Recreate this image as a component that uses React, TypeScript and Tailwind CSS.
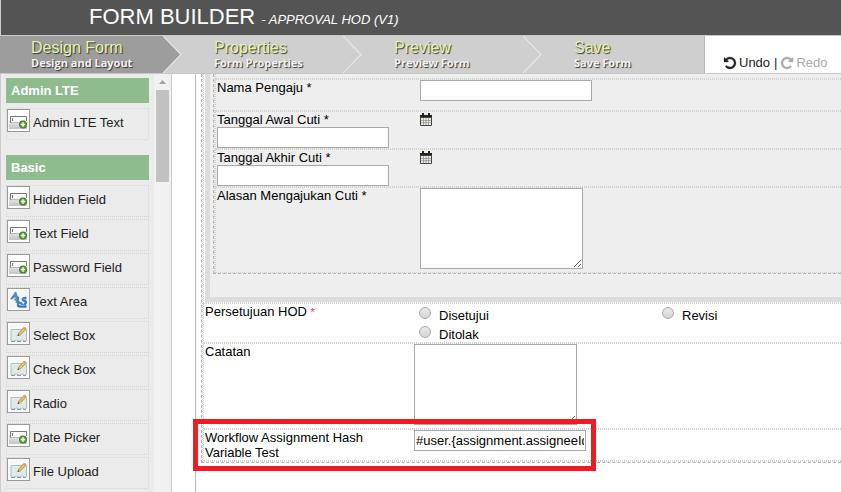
import { ReactNode } from "react";

type IconKind = "field" | "letters" | "pencil";

function FieldIcon() {
  return (
    <svg viewBox="0 0 21 21" className="size-full" aria-hidden="true">
      <defs>
        <linearGradient id="fieldBg" x1="0" y1="0" x2="0" y2="1">
          <stop offset="0" stopColor="#ececec" />
          <stop offset="1" stopColor="#c4c4c4" />
        </linearGradient>
      </defs>
      <rect x="1" y="10" width="18" height="9" fill="url(#fieldBg)" />
      <rect x="2" y="6" width="17" height="7" fill="#fafafa" />
      <path d="M2.500 13V6.500h16V11" fill="none" stroke="#777" />
      <path d="M2.500 12.500h9" stroke="#bbb" />
      <path d="M4.500 8v3" stroke="#777" />
      <circle cx="15" cy="14.500" r="4" fill="#3f7f22" />
      <circle cx="15" cy="14.500" r="3" fill="#5fa438" />
      <path d="M15 12.300v4.400M12.800 14.500h4.400" stroke="#fff" strokeWidth="1.400" />
    </svg>
  );
}

function LettersIcon() {
  return (
    <svg viewBox="0 0 21 21" className="size-full" aria-hidden="true">
      <rect x="1" y="1" width="19" height="19" fill="#f5f5f5" />
      <g fill="none" strokeLinecap="round" strokeLinejoin="round">
        <path d="M3.500 9.500c2-.5 3-3.500 4-5.500 1 2 .5 4 2 6M5 7.500h4" stroke="#4a8ad4" strokeWidth="2.200" />
        <path d="M7 10.500l4 2.500M8.500 9v4" stroke="#5fa15b" strokeWidth="1.800" />
        <path d="M10 8.500v8.500h3c2-1 1-3.500-2-3" stroke="#3f80cf" strokeWidth="2.200" />
        <path d="M17.500 9c-3-.5-3.500 2-1.500 2.500s2.500 2 1 3.500-1 2 .5 2.500h-6" stroke="#3a79c8" strokeWidth="2.400" />
        <path d="M15.500 10l1.500.5M12.500 16.500h4" stroke="#8fc0f0" strokeWidth=".8" />
      </g>
    </svg>
  );
}

function PencilIcon() {
  return (
    <svg viewBox="0 0 21 21" className="size-full" aria-hidden="true">
      <rect x="1" y="1" width="19" height="19" fill="#f8f8f8" />
      <path d="M3 6.500h15.500v11l-2 .5-2-1-3 1-3-1-3 1-2.500-.5z" fill="#dfe9ea" stroke="#b0c0c2" />
      <path d="M3 18.500h4M9 18.500h4M15 18.500h3" stroke="#8c9c9e" />
      <path d="M10 12.500l.7-2.500 5.300-5.500 1.800 1.800-5.300 5.500z" fill="#edc060" stroke="#9c7a38" strokeWidth=".7" />
      <path d="M15.500 5l1.300-1.300 1.900 1.800-1.300 1.400z" fill="#d99a80" />
      <path d="M9.500 13l.6-1.800 1.200 1.200z" fill="#444" />
    </svg>
  );
}

const icons: Record<IconKind, ReactNode> = {
  field: <FieldIcon />,
  letters: <LettersIcon />,
  pencil: <PencilIcon />,
};

const palette: { title: string; items: [string, IconKind][] }[] = [
  { title: "Admin LTE", items: [["Admin LTE Text", "field"]] },
  {
    title: "Basic",
    items: [
      ["Hidden Field", "field"],
      ["Text Field", "field"],
      ["Password Field", "field"],
      ["Text Area", "letters"],
      ["Select Box", "pencil"],
      ["Check Box", "pencil"],
      ["Radio", "pencil"],
      ["Date Picker", "field"],
      ["File Upload", "pencil"],
    ],
  },
];

function Sidebar() {
  return (
    <aside className="flex w-[172px] shrink-0 overflow-hidden border-x border-[#ccc] bg-[#ebebeb]">
      <div className="flex flex-1 flex-col gap-[15px] overflow-hidden pt-1 pr-[5px] pl-[5px]">
        {palette.map((group) => (
          <section key={group.title} className="shrink-0">
            <h2 className="h-[25px] bg-[#8fbc8f] pl-[5px] text-[13px] leading-[25px] font-bold text-white">
              {group.title}
            </h2>
            <ul className="flex flex-col gap-0.5 pt-[5px]">
              {group.items.map(([name, kind]) => (
                <li key={name} className="h-8 border border-dotted border-[#d6d6d6]">
                  <button type="button" className="flex items-center gap-[3px] text-[#222]">
                    <span className="size-[23px] border border-[#999] bg-white">{icons[kind]}</span>
                    <span className="pt-1 text-[13px] leading-[19px]">{name}</span>
                  </button>
                </li>
              ))}
            </ul>
          </section>
        ))}
      </div>
      <div className="flex w-[17px] shrink-0 flex-col items-center bg-[#f1f1f1]">
        <svg viewBox="0 0 17 16" className="h-4 w-[17px]" aria-hidden="true">
          <path d="M5 10l3.500-4 3.500 4z" fill="#a3a3a3" />
        </svg>
        <div className="h-[92px] w-[13px] bg-[#c1c1c1]" />
      </div>
    </aside>
  );
}

const steps = [
  ["Design Form", "Design and Layout"],
  ["Properties", "Form Properties"],
  ["Preview", "Preview Form"],
  ["Save", "Save Form"],
];

function StepArrow({ active }: { active: boolean }) {
  return (
    <svg viewBox="0 0 20 37" className="h-[37px] w-5 shrink-0" aria-hidden="true">
      {active && <path d="M0 0L18 18.500L0 37z" fill="#9d9d9d" />}
      <path d="M0 0L18 18.500L0 37" fill="none" stroke="#e6e6e6" strokeWidth="1.200" />
    </svg>
  );
}

function StepBar() {
  return (
    <nav className="flex h-[39px] shrink-0 border-y border-[#c8c8c8] bg-white">
      <ol className="flex w-[705px] border-r border-[#bbb] bg-[#cfcfcf]">
        {steps.map(([title, sub], i) => (
          <li key={title} className={i === 0 ? "flex w-[183px]" : i === 3 ? "flex flex-1" : "flex w-[180px]"}>
            <button
              type="button"
              className={
                i === 0
                  ? "flex w-[163px] flex-col items-start bg-[#9d9d9d] pt-[3px] pl-[31px] text-left whitespace-nowrap"
                  : "flex w-[160px] flex-col items-start pt-[3px] pl-[31px] text-left whitespace-nowrap"
              }
            >
              <span className="text-base leading-[17px] text-[#e3f5a9] [text-shadow:1px_1px_1px_#333]">{title}</span>
              <span className="font-['Open_Sans',sans-serif] text-[11px] leading-[14px] font-bold text-[#f2f2f2] [text-shadow:1px_1px_1px_#333]">
                {sub}
              </span>
            </button>
            {i < 3 && <StepArrow active={i === 0} />}
          </li>
        ))}
      </ol>
      <div className="flex flex-1 items-end gap-1 pb-0.5 pl-[19px] text-[13px] leading-4 whitespace-nowrap text-[#222]">
        <button type="button" className="flex items-center gap-[3px]">
          <TurnIcon />
          Undo
        </button>
        <span>|</span>
        <button type="button" disabled className="flex items-center gap-[3px] text-[#aaa]">
          <TurnIcon mirrored />
          Redo
        </button>
      </div>
    </nav>
  );
}

function TurnIcon({ mirrored = false }: { mirrored?: boolean }) {
  return (
    <svg
      viewBox="0 128 1536 1536"
      fill="currentColor"
      stroke="currentColor"
      strokeWidth="40"
      className={mirrored ? "size-3 -scale-x-100 overflow-visible" : "size-3 overflow-visible"}
      aria-hidden="true"
    >
      <path d="M1536 896q0 156-61 298t-164 245-245 164-298 61q-172 0-327-72.500t-264-204.500q-7-10-6.500-22.500t8.500-20.500l137-138q10-9 25-9 16 2 23 12 73 95 179 147t225 52q104 0 198.500-40.500t163.500-109.500 109.500-163.500 40.500-198.500-40.500-198.500-109.500-163.500-163.500-109.500-198.500-40.500q-98 0-188 35.500t-160 101.500l137 138q31 30 14 69-17 40-59 40h-448q-26 0-45-19t-19-45v-448q0-42 40-59 39-17 69 14l130 129q107-101 244.500-156.500t284.500-55.500q156 0 298 61t245 164 164 245 61 298z" />
    </svg>
  );
}

function CalendarIcon() {
  return (
    <svg viewBox="0 0 12 13" className="h-[13px] w-3" aria-hidden="true">
      <rect x="0" y="2" width="12" height="11" rx="1" fill="#444" />
      <rect x="0" y="2" width="12" height="2" fill="#222" />
      <path d="M2 0h2v3H2zM8 0h2v3H8z" fill="#222" />
      <rect x="1" y="5" width="10" height="7" fill="#f2ede3" />
      <path d="M3.500 5v7M6 5v7M8.500 5v7M1 7.500h10M1 9.700h10" stroke="#8a8a8a" strokeWidth=".7" />
    </svg>
  );
}

const row = "flex border border-r-0 border-dotted border-[#d0d0d0]";
const textBox = "block h-[21px] w-[172px] border border-[#a9a9a9] bg-white px-px text-[13px] outline-none";
const textArea = "block h-[81px] w-[163px] resize border border-[#a9a9a9] bg-white outline-none";

function DateRow({ id, label }: { id: string; label: string }) {
  return (
    <div className={`${row} h-[38px] pl-px`}>
      <div className="w-[203px] shrink-0">
        <label htmlFor={id} className="block">{label} *</label>
        <input id={id} type="text" className={textBox} />
      </div>
      <button type="button" aria-label={`${label}: kalender`} className="flex h-3.5 items-end">
        <CalendarIcon />
      </button>
    </div>
  );
}

function Choice({ label }: { label: string }) {
  return (
    <label className="flex h-[19px] items-start gap-2 pl-[5px]">
      <input
        type="radio"
        name="persetujuan"
        className="mt-[3px] size-3 appearance-none rounded-full border border-[#aaa] bg-linear-to-b from-[#e9e9e9] to-[#d6d6d6]"
      />
      <span className="pt-1">{label}</span>
    </label>
  );
}

function Canvas() {
  return (
    <main className="ml-[23px] min-w-0 flex-1 border-l border-[#bbb] bg-white pl-[5px] text-[13px] leading-[15px] text-black">
      <div className="border-b border-l border-dashed border-[#b5b5b5]">
        <div className="border-b border-l border-dotted border-[#d0d0d0]">
          <div className="border-l border-dotted border-[#d0d0d0] pl-px">
            <div className="border-b-[5px] border-l-[5px] border-[#ddd] bg-[#eee] pb-[23px] pl-[3px]">
              <div className="border-b border-l border-dashed border-[#b5b5b5]">
                <div className="border-l border-dotted border-[#d0d0d0]">
                  <div className={`${row} h-[5px] border-t-0`} />
                  <div className={`${row} h-8 pl-px`}>
                    <label htmlFor="nama" className="w-[203px] shrink-0">Nama Pengaju *</label>
                    <input id="nama" type="text" className={textBox} />
                  </div>
                  <DateRow id="awal" label="Tanggal Awal Cuti" />
                  <DateRow id="akhir" label="Tanggal Akhir Cuti" />
                  <div className={`${row} h-[86px] pl-px`}>
                    <label htmlFor="alasan" className="w-[203px] shrink-0">Alasan Mengajukan Cuti *</label>
                    <textarea id="alasan" className={textArea} />
                  </div>
                </div>
              </div>
            </div>
            <div className="border-b border-dotted border-[#d0d0d0]" />
          </div>
          <fieldset className={`${row} h-10 pl-px`}>
            <div className="w-[209px] shrink-0">
              Persetujuan HOD <span className="text-[11px] text-red-500">*</span>
            </div>
            <div className="grid flex-1 grid-cols-[243px_1fr] content-start">
              <Choice label="Disetujui" />
              <Choice label="Revisi" />
              <Choice label="Ditolak" />
            </div>
          </fieldset>
          <div className={`${row} h-[86px] pl-px`}>
            <label htmlFor="catatan" className="w-[209px] shrink-0">Catatan</label>
            <textarea id="catatan" className={textArea} />
          </div>
          <div className={`${row} relative h-8 pl-px`}>
            <label htmlFor="hash" className="w-[209px] shrink-0 pr-10">
              Workflow Assignment Hash Variable Test
            </label>
            <input id="hash" type="text" defaultValue="#user.{assignment.assigneeId}" className={textBox} />
            <div className="pointer-events-none absolute -top-[11px] -left-[11px] h-[52px] w-[403px] border-5 border-[#ed1c24]" />
          </div>
        </div>
      </div>
    </main>
  );
}

export default function App() {
  return (
    <div className="flex h-screen flex-col overflow-hidden bg-white font-['Liberation_Sans',Arial,sans-serif]">
      <header className="flex h-[35px] shrink-0 items-baseline gap-1.5 border-l border-[#ccc] bg-[#545454] pt-1 pl-[88px] whitespace-nowrap text-white">
        <h1 className="text-[22px] leading-[25px]">FORM BUILDER</h1>
        <span className="text-[13px] italic">- APPROVAL HOD (V1)</span>
      </header>
      <StepBar />
      <div className="flex min-h-0 flex-1">
        <Sidebar />
        <Canvas />
      </div>
    </div>
  );
}
